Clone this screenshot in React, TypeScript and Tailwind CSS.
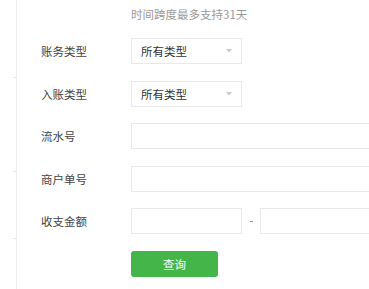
import React from "react";

const font = { fontFamily: '"Noto Sans CJK SC", "Noto Sans", sans-serif' };

function Caret() {
  return (
    <svg width="6" height="4" viewBox="0 0 6 4" className="block">
      <path d="M0 0 L6 0 L3 3.5 Z" fill="#c8c8c8" />
    </svg>
  );
}

function Row({ label, children }: { label: string; children: React.ReactNode }) {
  return (
    <div className="flex h-[26px] items-center">
      <div className="w-[90px] shrink-0 text-[11.5px] leading-[16px] text-[#444]">{label}</div>
      {children}
    </div>
  );
}

function Select() {
  return (
    <div className="flex h-[26px] w-[111px] shrink-0 items-center justify-between border border-[#e9e9e9] bg-white pl-[9px] pr-[9px]">
      <span className="text-[11.5px] leading-[16px] text-[#333]">所有类型</span>
      <Caret />
    </div>
  );
}

export default function App() {
  return (
    <div className="flex h-[289px] w-[369px] overflow-hidden bg-white" style={font}>
      <div className="flex w-[17px] shrink-0 flex-col border-r border-[#eeeeee]">
        <div className="mt-[77px] ml-[13px] h-[1px] w-[3px] bg-[#e8e8e8]" />
        <div className="mt-[93px] ml-[13px] h-[1px] w-[3px] bg-[#e8e8e8]" />
        <div className="mt-[66px] ml-[13px] h-[1px] w-[3px] bg-[#e8e8e8]" />
      </div>
      <div className="flex min-w-0 flex-1 flex-col pl-[24px] pt-[6px]">
        <div className="ml-[90px] h-[16px] whitespace-nowrap text-[11.5px] leading-[16px] text-[#9a9a9a]">
          时间跨度最多支持31天
        </div>
        <div className="mt-[16px] flex flex-col gap-[16.5px]">
          <Row label="账务类型">
            <Select />
          </Row>
          <Row label="入账类型">
            <Select />
          </Row>
          <Row label="流水号">
            <div className="h-[26px] w-[300px] shrink-0 border border-[#e9e9e9] bg-white" />
          </Row>
          <Row label="商户单号">
            <div className="h-[26px] w-[300px] shrink-0 border border-[#e9e9e9] bg-white" />
          </Row>
          <Row label="收支金额">
            <div className="h-[26px] w-[111px] shrink-0 border border-[#e9e9e9] bg-white" />
            <div className="flex w-[18px] shrink-0 justify-center">
              <div className="h-[1px] w-[3px] bg-[#999]" />
            </div>
            <div className="h-[26px] w-[200px] shrink-0 border border-[#e9e9e9] bg-white" />
          </Row>
          <div className="flex h-[26px] items-center">
            <div className="w-[90px] shrink-0" />
            <div className="flex h-[26px] w-[87px] items-center justify-center rounded-[3px] bg-[#44b549] text-[11.5px] leading-[16px] text-white">
              查询
            </div>
          </div>
        </div>
      </div>
    </div>
  );
}
